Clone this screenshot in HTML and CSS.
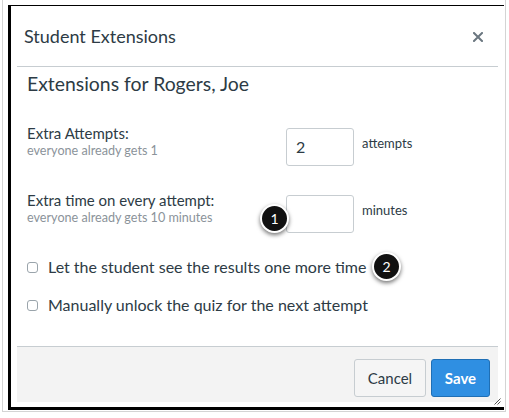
FILE: index.html
```html
<!DOCTYPE html>
<html>
<head>
<meta charset="utf-8">
<link rel="stylesheet" href="styles.css">
</head>
<body>
<div class="frame">
  <div class="dialog">
    <header class="titlebar">
      <h1 class="title">Student Extensions</h1>
      <button class="close" aria-label="Close">
        <svg width="10" height="10" viewBox="0 0 10 10"><path d="M1 1L9 9M9 1L1 9" stroke="#6b7780" stroke-width="2" stroke-linecap="square"/></svg>
      </button>
    </header>
    <div class="content">
      <h2 class="heading">Extensions for Rogers, Joe</h2>
      <div class="field first">
        <div class="label">
          <div class="label-main">Extra Attempts:</div>
          <div class="label-sub">everyone already gets 1</div>
        </div>
        <div class="input">2</div>
        <div class="unit">attempts</div>
      </div>
      <div class="field">
        <div class="label">
          <div class="label-main">Extra time on every attempt:</div>
          <div class="label-sub">everyone already gets 10 minutes</div>
        </div>
        <div class="input-wrap">
          <span class="badge badge-1">1</span>
          <div class="input"></div>
        </div>
        <div class="unit">minutes</div>
      </div>
      <label class="check first-check">
        <span class="box"></span>
        <span class="check-text">Let the student see the results one more time</span>
        <span class="badge badge-2">2</span>
      </label>
      <label class="check">
        <span class="box"></span>
        <span class="check-text">Manually unlock the quiz for the next attempt</span>
      </label>
    </div>
    <footer class="buttons">
      <button class="btn cancel">Cancel</button>
      <button class="btn save">Save</button>
      <svg class="grip" width="7" height="7" viewBox="0 0 7 7"><path d="M0.5 6.5L6.5 0.5M3.5 6.5L6.5 3.5" stroke="#555" stroke-width="1"/></svg>
    </footer>
  </div>
</div>
</body>
</html>
```

FILE: styles.css
```css
* { box-sizing: border-box; }
html, body { margin: 0; padding: 0; background: #ffffff; }
body {
  font-family: Lato, "Open Sans", "Liberation Sans", sans-serif;
  color: #2d3b45;
  width: 509px;
  height: 418px;
  overflow: hidden;
}
.frame {
  margin: 0 3px 0 2px;
  padding: 5px 2px 1px 5px;
  border-left: 1px solid #d4d4d4;
  border-right: 1px solid #d4d4d4;
  border-bottom: 1px solid #d4d4d4;
  height: 412px;
}
.dialog {
  position: relative;
  width: 496px;
  height: 405px;
  background: #fff;
  border-left: 3px solid #000;
  border-top: 1px solid #000;
  border-bottom: 3px solid #000;
  display: flex;
  flex-direction: column;
}
.titlebar {
  margin: 0 6px 0 6px;
  height: 61px;
  border-bottom: 1px solid #c7cdd1;
  display: flex;
  align-items: center;
  justify-content: space-between;
  padding: 0 15px 0 7px;
}
.title {
  margin: 0;
  font-size: 18px;
  font-weight: 400;
  line-height: 24px;
  color: #2d3b45;
}
.close {
  border: 0;
  background: none;
  padding: 0;
  width: 10px;
  height: 10px;
  display: block;
  margin-top: 1px;
}
.close svg { display: block; }
.content {
  margin: 0 6px 0 6px;
  padding: 5px 10px 0 10px;
  flex: 1;
}
.heading {
  margin: 0;
  font-size: 19.4px;
  font-weight: 400;
  line-height: 24px;
  color: #2d3b45;
}
.field {
  display: flex;
  align-items: flex-start;
  margin-top: 24px;
}
.field.first { margin-top: 27px; }
.label { width: 259px; }
.label-main {
  font-size: 15px;
  line-height: 20px;
  color: #2d3b45;
}
.label-sub {
  font-size: 12.6px;
  line-height: 16px;
  color: #8b939a;
}
.input-wrap { position: relative; margin-top: 5px; }
.input-wrap .input { margin-top: 0; }
.input {
  margin-top: 5px;
  width: 68px;
  height: 38px;
  border: 1px solid #c7cdd1;
  border-radius: 3px;
  font-size: 16px;
  line-height: 36px;
  padding: 0 9px;
  color: #2d3b45;
  background: #fff;
}
.unit {
  margin: 11px 0 0 8px;
  font-size: 13px;
  line-height: 18px;
  color: #2d3b45;
}
.check {
  display: flex;
  align-items: center;
  height: 24px;
  margin-top: 14px;
  position: relative;
}
.check.first-check { margin-top: 22px; }
.box {
  width: 11px;
  height: 11px;
  border: 1px solid #9aa4ab;
  border-radius: 3px;
  background: #fff;
  margin-right: 10px;
  margin-top: 1px;
}
.check-text {
  font-size: 16px;
  line-height: 24px;
  color: #2d3b45;
}
.badge {
  position: absolute;
  width: 29px;
  height: 29px;
  border-radius: 50%;
  background: #111;
  border: 2px solid #fff;
  color: #fff;
  font-size: 14px;
  line-height: 25px;
  text-align: center;
  box-shadow: 0 2px 4px rgba(0,0,0,0.55);
  z-index: 2;
}
.badge-1 { left: -26px; top: 9px; }
.badge-2 { left: 345px; top: -3px; }
.buttons {
  margin: 0 6px 5px 6px;
  height: 56px;
  background: #f3f3f3;
  border-top: 1px solid #c7cdd1;
  display: flex;
  justify-content: flex-end;
  align-items: flex-start;
  padding: 12px 8px 0 0;
  gap: 5px;
  position: relative;
}
.btn {
  height: 38px;
  border-radius: 3px;
  font-family: Lato, "Open Sans", "Liberation Sans", sans-serif;
  font-size: 15px;
  padding: 0;
}
.cancel {
  width: 72px;
  background: #f5f5f5;
  border: 1px solid #c7cdd1;
  color: #2d3b45;
}
.save {
  width: 59px;
  background: #2f8fe2;
  border: 1px solid #1f6fb5;
  color: #fff;
  font-weight: 700;
}
.grip {
  position: absolute;
  right: -3px;
  bottom: -3px;
}
```
